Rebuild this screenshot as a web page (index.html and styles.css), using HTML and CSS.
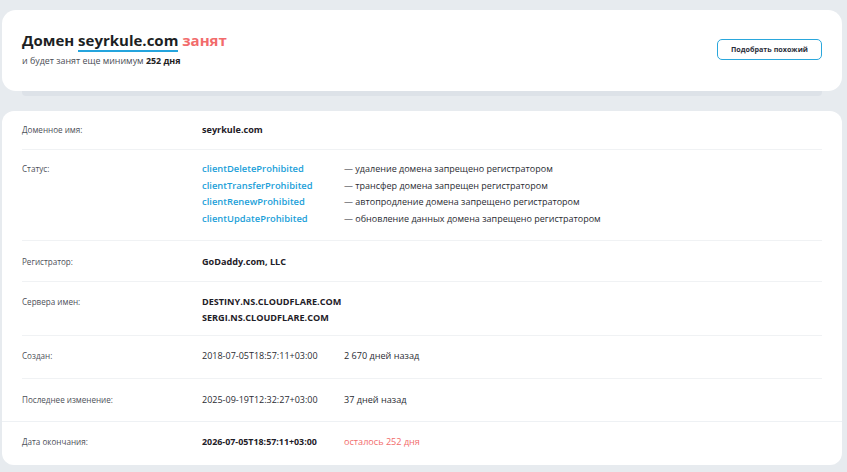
FILE: index.html
```html
<!DOCTYPE html>
<html lang="ru">
<head>
<meta charset="utf-8">
<link rel="stylesheet" href="styles.css">
</head>
<body>
<div class="page">
  <section class="head-card">
    <div class="head-text">
      <h1 class="title">Домен <span class="dom">seyrkule.com</span> <span class="busy">занят</span></h1>
      <p class="sub">и будет занят еще минимум <b>252 дня</b></p>
    </div>
    <button class="btn">Подобрать похожий</button>
  </section>
  <div class="strip"></div>
  <section class="info-card">
    <div class="row r1">
      <div class="label">Доменное имя:</div>
      <div class="val strong">seyrkule.com</div>
    </div>
    <div class="row r2">
      <div class="label">Статус:</div>
      <div class="status">
        <a class="code">clientDeleteProhibited</a><span class="desc">— удаление домена запрещено регистратором</span>
        <a class="code">clientTransferProhibited</a><span class="desc">— трансфер домена запрещен регистратором</span>
        <a class="code">clientRenewProhibited</a><span class="desc">— автопродление домена запрещено регистратором</span>
        <a class="code">clientUpdateProhibited</a><span class="desc">— обновление данных домена запрещено регистратором</span>
      </div>
    </div>
    <div class="row r3">
      <div class="label">Регистратор:</div>
      <div class="val strong">GoDaddy.com, LLC</div>
    </div>
    <div class="row r4">
      <div class="label">Сервера имен:</div>
      <div class="val strong ns"><div>DESTINY.NS.CLOUDFLARE.COM</div><div>SERGI.NS.CLOUDFLARE.COM</div></div>
    </div>
    <div class="row r5">
      <div class="label">Создан:</div>
      <div class="pair"><span class="date">2018-07-05T18:57:11+03:00</span><span class="ago">2 670 дней назад</span></div>
    </div>
    <div class="row r6">
      <div class="label">Последнее изменение:</div>
      <div class="pair"><span class="date">2025-09-19T12:32:27+03:00</span><span class="ago">37 дней назад</span></div>
    </div>
    <div class="row r7 full">
      <div class="label">Дата окончания:</div>
      <div class="pair"><span class="date bold">2026-07-05T18:57:11+03:00</span><span class="ago red">осталось 252 дня</span></div>
    </div>
  </section>
</div>
</body>
</html>
```

FILE: styles.css
```css
* { box-sizing: border-box; }
html, body { margin: 0; padding: 0; }
body {
  background: #e7ebef;
  font-family: "Open Sans", "Noto Sans", sans-serif;
  color: #222;
  width: 847px;
  height: 472px;
  overflow: hidden;
}
.page {
  padding: 10px 5px 0 2px;
}
.head-card {
  background: #fff;
  border-radius: 14px;
  height: 81px;
  display: flex;
  align-items: center;
  justify-content: space-between;
  padding: 0 20px 0 20px;
}
.head-text { margin-top: -5px; }
.title {
  margin: 0;
  font-size: 15px;
  font-weight: 700;
  line-height: 20px;
  color: #1d1f24;
}
.dom {
  border-bottom: 2px solid #24a4dd;
}
.busy { color: #f26b6b; }
.sub {
  margin: 5px 0 0;
  font-size: 8.9px;
  color: #4a4d55;
  line-height: 12px;
}
.sub b { font-weight: 700; color: #222; }
.btn {
  width: 105px;
  height: 21px;
  border: 1.5px solid #2aa7dc;
  border-radius: 5px;
  background: #fff;
  font-family: inherit;
  font-size: 7.2px;
  font-weight: 700;
  color: #2b2e3a;
  padding: 0;
  margin-top: -3px;
}
.strip {
  height: 5px;
  margin: 0 20px;
  background: #dde2e8;
  border-radius: 0 0 4px 4px;
}
.info-card {
  margin-top: 15px;
  background: #fff;
  border-radius: 12px;
  height: 354px;
  display: flex;
  flex-direction: column;
}
.row {
  flex-shrink: 0;
  display: grid;
  grid-template-columns: 180px 1fr;
  align-content: start;
  margin: 0 20px;
  border-bottom: 1px solid #f0f2f4;
  font-size: 9px;
  line-height: 16.5px;
}
.row.full {
  margin: 0;
  padding-left: 20px;
  padding-right: 20px;
  border-top: 1px solid #eef1f4;
  border-bottom: none;
}
.r6 { border-bottom: none; }
.r1 { height: 39px; padding-top: 11px; }
.r2 { height: 91px; padding-top: 11px; }
.r3 { height: 41px; padding-top: 13px; }
.r4 { height: 54px; padding-top: 12px; }
.r5 { height: 43px; padding-top: 12px; }
.r6 { height: 42px; padding-top: 13px; }
.r7 { height: 44px; padding-top: 12px; }
.label {
  font-size: 8.1px;
  color: #4d5058;
}
.val { color: #1e2027; }
.strong { font-weight: 700; font-size: 9.1px; }
.ns { line-height: 16px; }
.status {
  display: grid;
  grid-template-columns: 142px auto;
  justify-content: start;
  align-content: start;
}
.code {
  color: #1c9fd9;
  font-weight: 600;
  font-size: 9.4px;
}
.desc { color: #2a2c33; font-size: 9px; }
.pair {
  display: grid;
  grid-template-columns: 142px auto;
  justify-content: start;
  color: #2a2c33;
  font-size: 9.1px;
}
.date { font-size: 9px; }
.date.bold { font-weight: 700; color: #1e2027; font-size: 8.9px; }
.red { color: #f26b6b; }
```
